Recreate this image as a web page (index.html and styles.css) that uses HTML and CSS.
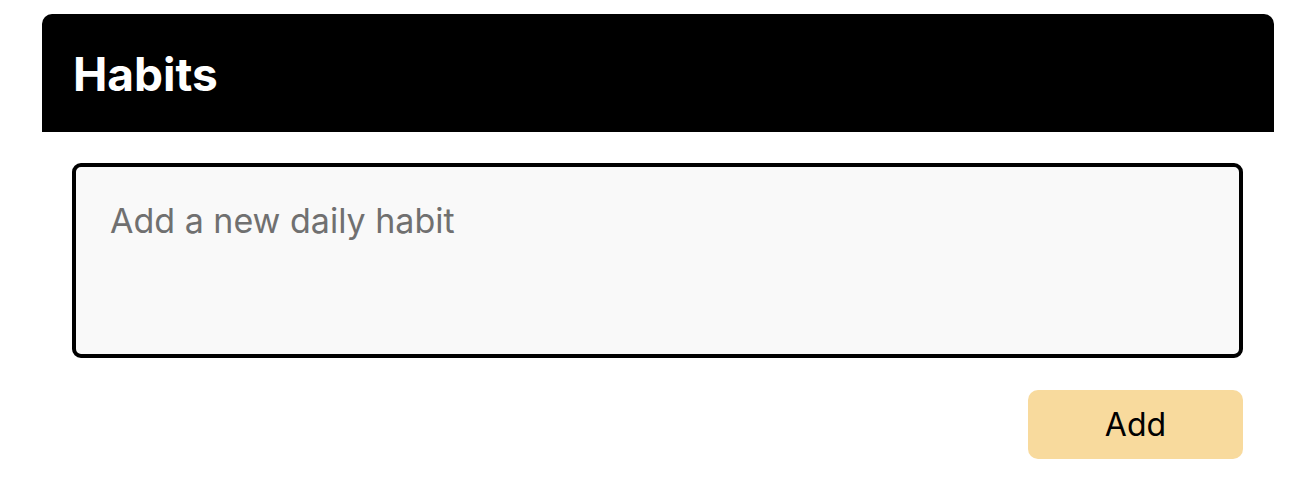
FILE: index.html
```html
<!DOCTYPE html>
<html>
<head>
<meta charset="utf-8">
<link rel="stylesheet" href="styles.css">
</head>
<body>
<div class="card">
  <div class="card-header"><h1 class="title">Habits</h1></div>
  <div class="card-body">
    <textarea class="habit-input" placeholder="Add a new daily habit"></textarea>
    <div class="actions"><button class="add-btn">Add</button></div>
  </div>
</div>
</body>
</html>
```
FILE: styles.css
```css
html, body { margin: 0; padding: 0; background: #fff; }
body { font-family: Inter, "Noto Sans", sans-serif; padding: 14px 35px 0 42px; }
.card { width: 1232px; }
.card-header {
  background: #000;
  border-radius: 10px 10px 0 0;
  height: 118px;
  display: flex;
  align-items: center;
  padding-left: 31px;
  box-sizing: border-box;
}
.title { margin: 0; color: #fff; font-size: 46px; font-weight: 700; line-height: 1; padding-top: 1px; }
.card-body { padding: 31px 31px 0 30px; display: flex; flex-direction: column; }
.habit-input {
  box-sizing: border-box;
  width: 100%;
  height: 195px;
  border: 4px solid #000;
  border-radius: 9px;
  background: #f9f9f9;
  padding: 34px 34px 30px;
  font-family: Inter, sans-serif;
  font-size: 34px;
  line-height: 1.2;
  resize: none;
  outline: none;
  display: block;
}
.habit-input::placeholder { color: #707070; }
.actions { display: flex; justify-content: flex-end; margin-top: 32px; }
.add-btn {
  width: 215px;
  height: 69px;
  border: none;
  border-radius: 10px;
  background: #f8da9d;
  color: #000;
  font-family: Inter, sans-serif;
  font-size: 32px;
  cursor: pointer;
}
```
